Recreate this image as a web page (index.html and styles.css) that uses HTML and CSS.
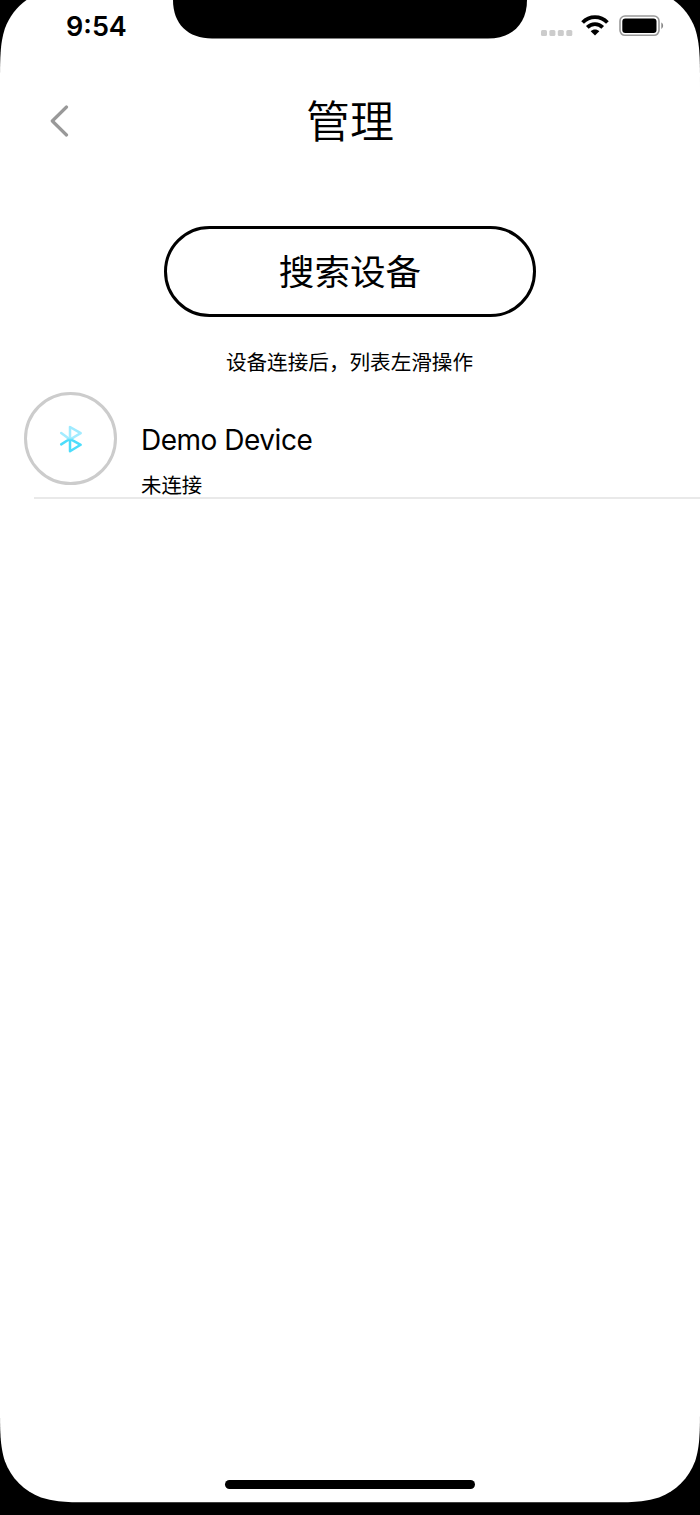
FILE: index.html
```html
<!DOCTYPE html>
<html lang="zh-CN">
<head>
<meta charset="utf-8">
<title>管理</title>
<link rel="stylesheet" href="styles.css">
</head>
<body>
<div class="phone">
  <svg class="frame" viewBox="0 0 700 1515" aria-hidden="true">
    <rect width="700" height="1515" fill="#000"/>
    <path fill="#fff" d="M99 -12.5H601C630 -12.5 643.5 -12.5 659 -7.6C675.8 -1.5 689 11.7 695.1 28.5C700 44 700 58 700 87V1403C700 1432 700 1446 695.1 1461.3C689 1478 675.8 1491.3 659 1497.4C643.5 1502.3 630 1502.3 601 1502.3H99C70 1502.3 56.5 1502.3 41 1497.4C24.2 1491.3 11 1478 4.9 1461.3C0 1446 0 1432 0 1403V87C0 58 0 44 4.9 28.5C11 11.7 24.2 -1.5 41 -7.6C56.5 -12.5 70 -12.5 99 -12.5Z"/>
    <path fill="#000" d="M173 0C173 24 188 38.5 212 38.5H488C512 38.5 527 24 527 0Z"/>
  </svg>
  <header class="status">
    <span class="time">9:54</span>
    <span class="indicators">
      <svg class="signal" viewBox="0 0 32 6"><g fill="#ccc"><rect width="6" height="6" rx="1.5"/><rect x="8.4" width="6" height="6" rx="1.5"/><rect x="16.8" width="6" height="6" rx="1.5"/><rect x="25.3" width="6" height="6" rx="1.5"/></g></svg>
      <svg class="wifi" viewBox="0 0 28 21"><g fill="none" stroke="#000" stroke-width="3.8"><path d="M1.6 7.5C8.5 .4 19.5 .4 26.4 7.5"/><path d="M6.3 12.3C10.6 8 17.4 8 21.7 12.3"/></g><path d="M9.7 16.2C12 14 16 14 18.3 16.2L14 20.6Z"/></svg>
      <svg class="battery" viewBox="0 0 45 22"><rect x="1" y="1" width="39" height="19.3" rx="5" fill="none" stroke="#999" stroke-width="1.6"/><rect x="3.3" y="3.5" width="34.2" height="14.4" rx="3"/><path d="M42.3 7.5C44.7 8.6 44.7 12.8 42.3 13.9Z" fill="#888"/></svg>
    </span>
  </header>
  <nav class="nav">
    <svg class="back" viewBox="0 0 20 32"><path d="M16.5 2L2.3 16L16.5 30" fill="none" stroke="#999" stroke-width="3.2" stroke-linecap="round" stroke-linejoin="round"/></svg>
    <h1 class="title">管理</h1>
  </nav>
  <main class="content">
    <button class="search">搜索设备</button>
    <p class="hint">设备连接后，列表左滑操作</p>
    <div class="device">
      <div class="badge">
        <svg class="bluetooth" viewBox="0 0 24 28"><defs><linearGradient id="bt" x1="0" y1="1" x2="0" y2="27" gradientUnits="userSpaceOnUse"><stop offset="0" stop-color="#9ceaff"/><stop offset=".46" stop-color="#a5ecff"/><stop offset=".54" stop-color="#4cddfb"/><stop offset="1" stop-color="#4cddfb"/></linearGradient></defs><path d="M2.2 8L11 14.5L21.7 8.2L11 2V26.2L21.7 19.8L11 13.8L2.2 19.4" fill="none" stroke="url(#bt)" stroke-width="2.5" stroke-linecap="round" stroke-linejoin="round"/></svg>
      </div>
      <div class="info">
        <div class="name">Demo Device</div>
        <div class="state">未连接</div>
      </div>
    </div>
  </main>
  <div class="home"></div>
</div>
</body>
</html>
```
FILE: styles.css
```css
* { box-sizing: border-box; }
body {
  margin: 0;
  color: #000;
  font-family: Inter, "Noto Sans CJK SC", sans-serif;
}
.phone {
  position: relative;
  isolation: isolate;
  display: flex;
  flex-direction: column;
  height: 1515px;
  overflow: hidden;
}
.frame {
  position: absolute;
  inset: 0;
  z-index: -1;
  width: 100%;
  height: 100%;
}
svg { display: block; }
.status {
  display: flex;
  justify-content: space-between;
  height: 70px;
  padding: 10px 36.5px 0 66px;
}
.time {
  font-size: 27px;
  font-weight: 600;
  line-height: 34px;
}
.indicators {
  display: flex;
  align-items: flex-start;
  padding-top: 5px;
}
.signal { width: 32px; height: 6px; margin: 15px 8px 0 0; }
.wifi { width: 28px; height: 21px; margin-right: 9.5px; }
.battery { width: 45px; height: 22px; }
.nav {
  display: grid;
  grid-template-columns: 50px 1fr 50px;
  align-items: center;
  height: 102px;
  padding: 0 50px;
}
.back { width: 20px; height: 32px; }
.title {
  margin: 0 0 4px;
  font-size: 44px;
  font-weight: 350;
  line-height: 64px;
  text-align: center;
  font-family: "Noto Sans CJK SC", sans-serif;
}
.content {
  flex: 1;
  display: flex;
  flex-direction: column;
  align-items: center;
  padding-top: 54px;
}
.search {
  width: 372px;
  height: 91px;
  padding: 0 0 3px;
  border: 3px solid #000;
  border-radius: 46px;
  background: none;
  color: #000;
  font: 400 35.6px/50px "Noto Sans CJK SC", sans-serif;
}
.hint {
  margin: 29px 1px 0 0;
  font: 400 20.6px/30px "Noto Sans CJK SC", sans-serif;
}
.device {
  display: flex;
  align-self: stretch;
  gap: 24px;
  height: 123px;
  padding: 16px 0 0 24px;
  background: linear-gradient(#e9e9e9, #e9e9e9) 34px 100% / 100% 2px no-repeat;
}
.badge {
  display: grid;
  place-items: center;
  width: 93px;
  height: 93px;
  border: 3px solid #ccc;
  border-radius: 50%;
}
.bluetooth { width: 24px; height: 28px; }
.info { padding-top: 30px; }
.name { font-size: 28px; line-height: 36px; letter-spacing: -.48px; }
.state {
  margin-top: 11px;
  font: 400 20.4px/30px "Noto Sans CJK SC", sans-serif;
}
.home {
  align-self: center;
  width: 250px;
  height: 9px;
  margin-bottom: 26px;
  border-radius: 5px;
  background: #000;
}
```
